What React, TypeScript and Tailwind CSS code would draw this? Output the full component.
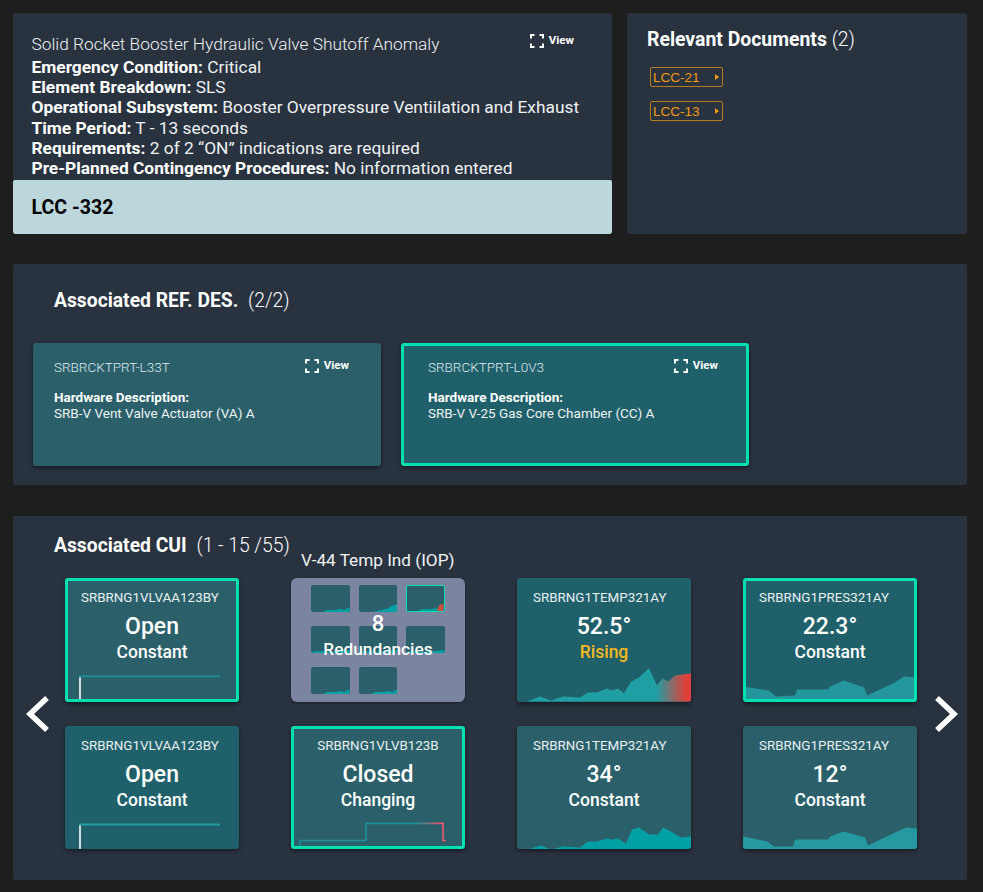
import React from "react";

const roboto = "font-['Roboto',sans-serif]";

function ViewLink({ className = "" }: { className?: string }) {
  return (
    <div className={`flex items-center gap-[5px] text-[11.5px] font-bold leading-none text-white ${className}`}>
      <svg width="14" height="14" viewBox="0 0 14 14" fill="none" stroke="white" strokeWidth="2">
        <path d="M1 4.5V1H4.5M9.5 1H13V4.5M13 9.5V13H9.5M4.5 13H1V9.5" />
      </svg>
      <span>View</span>
    </div>
  );
}

function Info({ label, value }: { label: string; value: string }) {
  return (
    <div className="h-[20.2px] leading-[20.2px] whitespace-nowrap">
      <span className="font-bold">{label}</span> <span className="font-normal text-[#eef1f3]">{value}</span>
    </div>
  );
}

function DocButton({ label }: { label: string }) {
  return (
    <div className="flex h-5 w-[73px] items-center justify-between rounded-[2px] border border-[#b97c1c] pl-[2px] pr-[3px] font-['Liberation_Sans',sans-serif] text-[13.5px] leading-none text-[#f59a0c]">
      <span className="mt-[1px]">{label}</span>
      <span className="h-0 w-0 border-y-[3px] border-l-[4px] border-y-transparent border-l-[#f59a0c]" />
    </div>
  );
}

function RefCard({ id, desc, selected }: { id: string; desc: string; selected?: boolean }) {
  return (
    <div
      className={`h-[123px] w-[348px] rounded-[3px] shadow-[0_2px_4px_rgba(0,0,0,0.45)] ${
        selected ? "border-[3px] border-[#00e0b0] bg-[#20606a] pl-[24px] pr-[28px] pt-[13px]" : "bg-[#2b606b] pl-[21px] pr-[32px] pt-[16px]"
      }`}
    >
      <div className="flex items-start justify-between">
        <div className="text-[13.5px] font-light leading-[17px] text-[#dfe8ea]">{id}</div>
        <ViewLink />
      </div>
      <div className="mt-[13px] text-[13.5px] font-bold leading-4 text-white">Hardware Description:</div>
      <div className="text-[13.5px] font-normal leading-4 text-[#eef3f4]">{desc}</div>
    </div>
  );
}

const tempUp = "10,123 23,118 34,122 46,118 63,119 71,114 80,114 90,110 94,112 101,110 107,115 114,103 122,99 132,90 140,107 145,100 151,103 158,97 174,95 174,123";
const tempFlat = "11,123 24,119 34,123 46,120 63,121 71,115 80,115 90,112 95,113 101,112 109,117 115,103 122,101 132,108 141,108 146,101 154,105 164,111 174,110 174,123";
const presA = "0,108 26,112 33,118 52,117 54,111 85,111 87,108 101,102 121,109 124,117 150,105 161,98 174,99 174,123 0,123";
const presB = "0,110 24,115 31,120 50,120 52,113 85,113 87,110 101,105 122,111 125,119 150,107 163,101 174,102 174,123 0,123";

function CardChart({ kind, selected, uid }: { kind: string; selected?: boolean; uid: string }) {
  const vb = selected ? "3 3 168 117" : "0 0 174 123";
  return (
    <svg className="absolute inset-0 h-full w-full" viewBox={vb} preserveAspectRatio="none">
      <defs>
        <linearGradient id={`g-${uid}`} gradientUnits="userSpaceOnUse" x1="0" x2="174" y1="0" y2="0">
          <stop offset="0.8" stopColor="#1f9ea3" />
          <stop offset="0.97" stopColor="#e0403a" />
        </linearGradient>
        <linearGradient id={`s-${uid}`} gradientUnits="userSpaceOnUse" x1="0" x2="174" y1="0" y2="0">
          <stop offset="0.72" stopColor="#1b8f9a" />
          <stop offset="0.86" stopColor="#f0566f" />
        </linearGradient>
      </defs>
      {kind === "open1" && (
        <>
          <path d="M14 98H155" stroke="#1d8f97" strokeWidth="1.6" fill="none" />
          <path d="M15 99V123" stroke="#ffffff" strokeWidth="1.6" fill="none" />
        </>
      )}
      {kind === "open2" && (
        <>
          <path d="M14 98H155" stroke="#1f9ea3" strokeWidth="2" fill="none" />
          <path d="M15 99V123" stroke="#ffffff" strokeWidth="1.6" fill="none" />
        </>
      )}
      {kind === "closed" && (
        <path d="M9 121V114H75V97H152V114H155" stroke={`url(#s-${uid})`} strokeWidth="1.6" fill="none" />
      )}
      {kind === "rising" && <polygon points={tempUp} fill={`url(#g-${uid})`} />}
      {kind === "temp" && <polygon points={tempFlat} fill="#00a0a5" />}
      {kind === "presA" && <polygon points={presA} fill="#24979d" />}
      {kind === "presB" && <polygon points={presB} fill="#24999f" />}
    </svg>
  );
}

function CuiCard({
  id, value, status, kind, selected, dark, rising, centerId,
}: { id: string; value: string; status: string; kind: string; selected?: boolean; dark?: boolean; rising?: boolean; centerId?: boolean }) {
  return (
    <div
      className={`relative h-[123.5px] w-[174px] overflow-hidden rounded-[3px] text-center shadow-[0_2px_4px_rgba(0,0,0,0.45)] ${
        selected ? "border-[3px] border-[#00e0b0] pt-[8px]" : "pt-[11px]"
      } ${dark ? "bg-[#20606a]" : "bg-[#2b606b]"}`}
    >
      <CardChart kind={kind} selected={selected} uid={`${kind}${id}`} />
      <div
        className={`relative text-[13.4px] font-normal leading-[18px] text-[#e8eff0] ${
          centerId ? "text-center" : selected ? "pl-[13px] text-left" : "pl-[16px] text-left"
        }`}
      >
        {id}
      </div>
      <div className="relative mt-[6px] text-[23px] font-medium leading-[28px] text-white">{value}</div>
      <div className={`relative text-[17.5px] font-medium leading-[22px] ${rising ? "text-[#f4b71c]" : "text-white"}`}>{status}</div>
    </div>
  );
}

function Mini({ h, selected, red }: { h: string; selected?: boolean; red?: boolean }) {
  return (
    <div className={`relative h-[27px] w-[38.5px] overflow-hidden rounded-[2px] bg-[#2b606b] ${selected ? "border-[1.5px] border-[#00e0b0]" : ""}`}>
      <svg className="absolute inset-0 h-full w-full" viewBox="0 0 39 27" preserveAspectRatio="none">
        <polygon points={h} fill="#00a0a5" />
        {red && <polygon points="32,27 34,22 36,20 39,19 39,27" fill="#c9503f" />}
      </svg>
    </div>
  );
}

function RedundancyCard() {
  const a = "12,27 16,25 24,25 30,24 34,25 39,22 39,27";
  const b = "14,27 22,25 28,24 30,23 33,21 39,19 39,27";
  const c = "0,26 5,25 20,26 39,24 39,27 0,27";
  return (
    <div className="relative h-[123.5px] w-[174px]">
      <div className="absolute bottom-full left-[10px] mb-[8px] whitespace-nowrap text-[17.2px] font-normal leading-5 text-[#f0f3f5]">
        V-44 Temp Ind (IOP)
      </div>
      <div className="relative h-full rounded-[6px] bg-[#7b859f] pl-5 pt-[7px] shadow-[0_1px_3px_rgba(0,0,0,0.4)]">
        <div className="grid grid-cols-[38.5px_38.5px_38.5px] gap-x-[9px] gap-y-[14px]">
          <Mini h={a} />
          <Mini h={b} />
          <Mini h={a} selected red />
          <Mini h={c} />
          <Mini h={c} />
          <Mini h={c} />
          <Mini h={a} />
          <Mini h={a} />
        </div>
        <div className="absolute inset-x-0 top-[33px] text-center font-medium text-white">
          <div className="text-[22px] leading-[26px]">8</div>
          <div className="text-[17.3px] leading-[24px]">Redundancies</div>
        </div>
      </div>
    </div>
  );
}

function Chevron({ right }: { right?: boolean }) {
  return (
    <svg width="24" height="36" viewBox="0 0 24 36" fill="none" stroke="white" strokeWidth="5.5" className="shrink-0">
      <path d={right ? "M3 2L20 18L3 34" : "M21 2L4 18L21 34"} />
    </svg>
  );
}

export default function App() {
  return (
    <div className={`${roboto} h-[892px] w-[983px] overflow-hidden bg-[#1e1e1e] pl-[13px] pr-[16px] pt-[13px] text-white`}>
      <div className="flex h-[221px] gap-[15px]">
        <div className="flex w-[599px] flex-col overflow-hidden rounded-[2px] bg-[#29323f]">
          <div className="flex-1 pl-[18.5px] pr-[38px] pt-[21px] text-[17.35px]">
            <div className="flex items-start justify-between">
              <div className="text-[17.3px] font-light leading-5 text-[#eef1f3]">Solid Rocket Booster Hydraulic Valve Shutoff Anomaly</div>
              <ViewLink />
            </div>
            <div className="mt-[3px]">
              <Info label="Emergency Condition:" value="Critical" />
              <Info label="Element Breakdown:" value="SLS" />
              <Info label="Operational Subsystem:" value="Booster Overpressure Ventiilation and Exhaust" />
              <Info label="Time Period:" value="T - 13 seconds" />
              <Info label="Requirements:" value="2 of 2 “ON” indications are required" />
              <Info label="Pre-Planned Contingency Procedures:" value="No information entered" />
            </div>
          </div>
          <div className="flex h-[54px] items-center rounded-[2px] bg-[#bbd7db] pl-[18.5px] pt-[1px] text-[19.6px] font-bold text-black">LCC -332</div>
        </div>
        <div className="w-[340px] rounded-[3px] bg-[#29323f] pl-5 pt-[13px]">
          <div className="mt-[1px] text-[19.4px] leading-[26px]">
            <span className="font-bold">Relevant Documents</span> <span className="font-light">(2)</span>
          </div>
          <div className="ml-[3px] mt-[14px] flex flex-col gap-[14px]">
            <DocButton label="LCC-21" />
            <DocButton label="LCC-13" />
          </div>
        </div>
      </div>

      <div className="mt-[30px] h-[221px] rounded-[2px] bg-[#29323f] pl-5 pt-[24px]">
        <div className="pl-[21px] text-[19.3px] leading-[26px]">
          <span className="font-bold">Associated REF. DES.</span> <span className="ml-[5px] font-light">(2/2)</span>
        </div>
        <div className="mt-[29px] flex gap-5">
          <RefCard id="SRBRCKTPRT-L33T" desc="SRB-V Vent Valve Actuator (VA) A" />
          <RefCard id="SRBRCKTPRT-L0V3" desc="SRB-V V-25 Gas Core Chamber (CC) A" selected />
        </div>
      </div>

      <div className="mt-[31px] h-[364px] rounded-[2px] bg-[#29323f] pt-[17px]">
        <div className="pl-[41px] text-[19.3px] leading-[26px]">
          <span className="font-bold">Associated CUI</span> <span className="ml-[5px] font-light">(1 - 15 /55)</span>
        </div>
        <div className="mt-[19px] flex items-center pl-[13px]">
          <Chevron />
          <div className="ml-[15px] grid grid-cols-[174px_174px_174px_174px] gap-x-[52px] gap-y-6">
            <CuiCard id="SRBRNG1VLVAA123BY" value="Open" status="Constant" kind="open1" selected />
            <RedundancyCard />
            <CuiCard id="SRBRNG1TEMP321AY" value="52.5°" status="Rising" kind="rising" dark rising />
            <CuiCard id="SRBRNG1PRES321AY" value="22.3°" status="Constant" kind="presA" selected dark />
            <CuiCard id="SRBRNG1VLVAA123BY" value="Open" status="Constant" kind="open2" dark />
            <CuiCard id="SRBRNG1VLVB123B" value="Closed" status="Changing" kind="closed" selected centerId />
            <CuiCard id="SRBRNG1TEMP321AY" value="34°" status="Constant" kind="temp" />
            <CuiCard id="SRBRNG1PRES321AY" value="12°" status="Constant" kind="presB" />
          </div>
          <div className="ml-[17px]">
            <Chevron right />
          </div>
        </div>
      </div>
    </div>
  );
}
